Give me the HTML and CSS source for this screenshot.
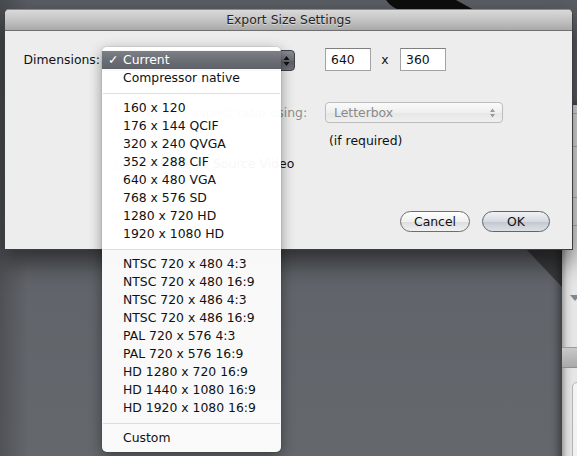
FILE: index.html
```html
<!DOCTYPE html>
<html>
<head>
<meta charset="utf-8">
<link rel="stylesheet" href="styles.css">
</head>
<body>
<div class="desktop">
  <svg class="wallpaper" width="577" height="456" viewBox="0 0 577 456">
    <path d="M386,0 H456 L474,10 H400 C393,8 389,4 386,0 Z" fill="#0d0d0d"/>
    <path d="M527,250 H562 V287 Z" fill="#3a3b3e"/>
  </svg>

  <div class="side-window">
    <div class="sw-row sw-r1"></div>
    <div class="sw-row sw-r2"></div>
    <div class="sw-row sw-r3"></div>
    <div class="sw-row sw-r4"></div>
    <div class="sw-tri"></div>
    <div class="sw-bar"></div>
    <div class="sw-box"></div>
  </div>

  <div class="dialog">
    <div class="titlebar">Export Size Settings</div>
    <div class="body">
      <div class="form">
        <div class="label">Dimensions:</div>
        <div class="popup popup-active">
          <svg class="arrows" width="7" height="12" viewBox="0 0 7 12"><path d="M3.5,1 L6.5,5 H0.5 Z M3.5,11 L6.5,7 H0.5 Z" fill="#111"/></svg>
        </div>
        <div class="size">
          <span class="field">640</span>
          <span class="times">x</span>
          <span class="field">360</span>
        </div>
        <div class="check r2"><span class="box"></span><span class="dim">Preserve aspect ratio using:</span></div>
        <div class="popup popup-disabled">
          <span>Letterbox</span>
          <svg class="arrows" width="7" height="12" viewBox="0 0 7 12"><path d="M3.5,1.5 L6,5 H1 Z M3.5,10.5 L6,7 H1 Z" fill="#9a9a9a"/></svg>
        </div>
        <div class="note">(if required)</div>
        <div class="check r4"><span class="box"></span><span>Limit size to Source Video</span></div>
      </div>
      <div class="buttons">
        <button class="btn">Cancel</button>
        <button class="btn btn-default">OK</button>
      </div>
    </div>
  </div>

  <div class="menu">
    <div class="item selected"><span class="tick">✓</span>Current</div>
    <div class="item">Compressor native</div>
    <div class="sep"></div>
    <div class="item">160 x 120</div>
    <div class="item">176 x 144 QCIF</div>
    <div class="item">320 x 240 QVGA</div>
    <div class="item">352 x 288 CIF</div>
    <div class="item">640 x 480 VGA</div>
    <div class="item">768 x 576 SD</div>
    <div class="item">1280 x 720 HD</div>
    <div class="item">1920 x 1080 HD</div>
    <div class="sep"></div>
    <div class="item">NTSC 720 x 480 4:3</div>
    <div class="item">NTSC 720 x 480 16:9</div>
    <div class="item">NTSC 720 x 486 4:3</div>
    <div class="item">NTSC 720 x 486 16:9</div>
    <div class="item">PAL 720 x 576 4:3</div>
    <div class="item">PAL 720 x 576 16:9</div>
    <div class="item">HD 1280 x 720 16:9</div>
    <div class="item">HD 1440 x 1080 16:9</div>
    <div class="item">HD 1920 x 1080 16:9</div>
    <div class="sep"></div>
    <div class="item">Custom</div>
  </div>
</div>
</body>
</html>
```
FILE: styles.css
```css
html, body {
  margin: 0;
  padding: 0;
}
body {
  font-family: "DejaVu Sans", "Liberation Sans", sans-serif;
  font-size: 12.4px;
  color: #111;
  background: #5f6267;
}
.desktop {
  position: relative;
  width: 577px;
  height: 456px;
  overflow: hidden;
  background:
    linear-gradient(to right, rgba(0,0,0,0.2), rgba(0,0,0,0) 28px),
    linear-gradient(#5a5d63, #61646a 60%, #64676c);
}
.wallpaper {
  position: absolute;
  left: 0;
  top: 0;
}

/* background window on the right */
.side-window {
  position: absolute;
  left: 562px;
  top: 105px;
  width: 40px;
  height: 360px;
  background: linear-gradient(to right, #a4a4a4, #d6d6d6 5px, #e6e6e6 11px);
  box-shadow: -3px 0 8px rgba(0,0,0,0.45);
}
.sw-row {
  border-bottom: 1px solid #b9b9b9;
}
.sw-r1 { height: 8px; }
.sw-r2 { height: 32px; }
.sw-r3 { height: 50px; }
.sw-r4 { height: 27px; }
.sw-tri {
  margin: 69px 0 0 8px;
  width: 0;
  height: 0;
  border-left: 5px solid transparent;
  border-right: 5px solid transparent;
  border-top: 6px solid #7b8697;
}
.sw-bar {
  margin-top: 46px;
  height: 19px;
  background: linear-gradient(#c9c9c9, #a9a9a9);
  border-top: 1px solid #9c9c9c;
  border-bottom: 1px solid #8f8f8f;
}
.sw-box {
  margin: 14px 0 0 10px;
  height: 200px;
  border: 1px solid #b3b3b3;
  border-radius: 5px;
  background: linear-gradient(#f4f4f4, #ececec);
}

/* dialog */
.dialog {
  position: absolute;
  left: 4px;
  top: 9px;
  width: 569px;
  height: 241px;
  box-sizing: border-box;
  border: 1px solid #3e3f42;
  border-top-color: #8a8a8a;
  border-radius: 5px 5px 0 0;
  background: #ededed;
  box-shadow: 0 12px 26px rgba(0,0,0,0.55);
  display: flex;
  flex-direction: column;
}
.titlebar {
  height: 20px;
  line-height: 20px;
  text-align: center;
  color: #262626;
  border-radius: 4px 4px 0 0;
  background: linear-gradient(#d9d9d9, #c4c4c4 50%, #a9a9a9);
  border-bottom: 1px solid #6f6f6f;
  text-shadow: 0 1px 0 rgba(255,255,255,0.45);
}
.body {
  flex: 1;
  display: flex;
  flex-direction: column;
  padding: 17px 22px 17px 0;
}
.form {
  display: grid;
  grid-template-columns: 97px 223px 1fr;
  grid-template-rows: 54px 31px 22px 23px;
  align-items: start;
}
.label {
  grid-column: 1;
  grid-row: 1;
  height: 23px;
  line-height: 23px;
  text-align: right;
  padding-right: 2px;
  color: #111;
}
.popup {
  box-sizing: border-box;
  border-radius: 4px;
  display: flex;
  align-items: center;
  justify-content: space-between;
}
.popup-active {
  grid-column: 2;
  grid-row: 1;
  width: 193px;
  height: 21px;
  margin-top: 2px;
  justify-content: flex-end;
  padding-right: 4px;
  border: 1px solid #3f4145;
  background: linear-gradient(#8a8d93, #6b6e74 50%, #5a5d62 51%, #6f7278);
}
.size {
  grid-column: 3;
  grid-row: 1;
  display: flex;
  align-items: center;
}
.field {
  box-sizing: border-box;
  width: 46px;
  height: 23px;
  line-height: 21px;
  padding-left: 5px;
  background: #fff;
  border: 1px solid #a3a3a3;
  border-top-color: #7f7f7f;
}
.times {
  width: 30px;
  text-align: center;
  margin-left: -1px;
}
.check {
  grid-column: 2 / 4;
  display: flex;
  align-items: center;
  padding-left: 13px;
  gap: 6px;
  white-space: nowrap;
}
.check.r2 {
  grid-row: 2;
  height: 21px;
}
.check.r4 {
  grid-row: 4;
  height: 16px;
}
.box {
  box-sizing: border-box;
  width: 13px;
  height: 13px;
  border: 1px solid #9c9c9c;
  border-radius: 2px;
  background: linear-gradient(#fcfcfc, #e2e2e2);
}
.dim {
  color: #8e8e8e;
}
.popup-disabled {
  grid-column: 3;
  grid-row: 2;
  width: 178px;
  height: 21px;
  padding: 0 6px 0 8px;
  color: #8a8a8a;
  border: 1px solid #bdbdbd;
  background: linear-gradient(#fafafa, #efefef 50%, #e6e6e6 51%, #f0f0f0);
}
.note {
  grid-column: 3;
  grid-row: 3;
  height: 15px;
  line-height: 15px;
  padding-left: 4px;
}
.buttons {
  margin-top: auto;
  display: flex;
  justify-content: flex-end;
  gap: 12px;
}
.btn {
  font-family: inherit;
  font-size: 12.4px;
  color: #111;
  height: 21px;
  padding: 0;
  border-radius: 11px;
  border: 1px solid #6d6d6d;
  background: linear-gradient(#ffffff, #f0f0f0 50%, #dcdcdc 51%, #f2f2f2);
  width: 70px;
  line-height: 19px;
}
.btn-default {
  width: 68px;
  border-color: #5f6570;
  background: linear-gradient(#f0f2f5, #d6dae0 50%, #c2c7cf 51%, #dde1e6);
}

/* open popup menu */
.menu {
  position: absolute;
  left: 102px;
  top: 47px;
  width: 179px;
  box-sizing: border-box;
  padding: 4px 0 5px;
  border-radius: 5px;
  background: rgba(255,255,255,0.965);
  box-shadow: 0 4px 14px rgba(0,0,0,0.4), 0 0 0 1px rgba(0,0,0,0.06);
}
.item {
  position: relative;
  height: 18px;
  line-height: 18px;
  padding-left: 21px;
  white-space: nowrap;
  color: #111;
}
.item.selected {
  color: #fff;
  background: linear-gradient(#7d8086, #6b6e74 50%, #5f6268);
}
.tick {
  position: absolute;
  left: 6px;
  top: 0;
}
.sep {
  height: 12px;
  display: flex;
  align-items: center;
}
.sep::before {
  content: "";
  display: block;
  width: 100%;
  margin: 0 1px;
  height: 1px;
  background: #dedede;
}
```
